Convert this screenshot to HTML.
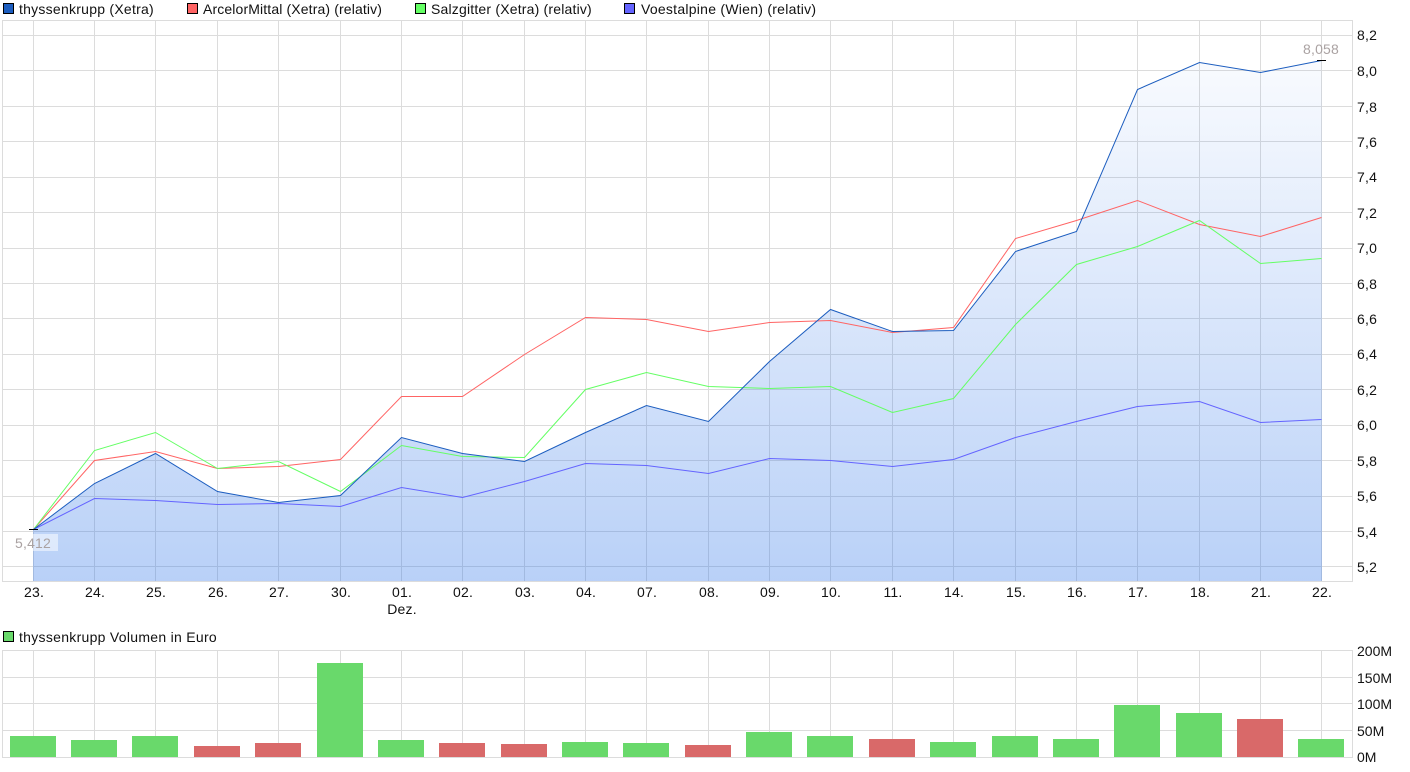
<!DOCTYPE html>
<html>
<head>
<meta charset="utf-8">
<style>
html,body{margin:0;padding:0;background:#fff;width:1410px;height:772px;overflow:hidden}
svg{display:block}
text{font-family:"Liberation Sans",sans-serif;font-size:14px;fill:#111;letter-spacing:.2px}
</style>
</head>
<body>
<svg width="1410" height="772" viewBox="0 0 1410 772" xmlns="http://www.w3.org/2000/svg">
<defs>
<linearGradient id="a" gradientUnits="userSpaceOnUse" x1="0" y1="60" x2="0" y2="581">
<stop offset="0" stop-color="#2a72e8" stop-opacity="0.03"/>
<stop offset="1" stop-color="#2a72e8" stop-opacity="0.33"/>
</linearGradient>
</defs>
<g stroke="#dcdcdc" stroke-width="1" fill="none" shape-rendering="crispEdges">
<path d="M2.5 20.5H1352.5V581.5H2.5Z"/>
<path d="M2 35.5H1352M2 70.5H1352M2 106.5H1352M2 141.5H1352M2 177.5H1352M2 212.5H1352M2 248.5H1352M2 283.5H1352M2 318.5H1352M2 354.5H1352M2 389.5H1352M2 425.5H1352M2 460.5H1352M2 496.5H1352M2 531.5H1352M2 566.5H1352"/>
<path d="M33.5 20V581M94.5 20V581M155.5 20V581M217.5 20V581M278.5 20V581M340.5 20V581M401.5 20V581M462.5 20V581M524.5 20V581M585.5 20V581M646.5 20V581M708.5 20V581M769.5 20V581M830.5 20V581M892.5 20V581M953.5 20V581M1015.5 20V581M1076.5 20V581M1137.5 20V581M1199.5 20V581M1260.5 20V581M1321.5 20V581"/>
<path d="M2.5 650.5H1352.5V757.5H2.5Z"/>
<path d="M2 677.5H1352M2 703.5H1352M2 730.5H1352"/>
<path d="M33.5 650V757M94.5 650V757M155.5 650V757M217.5 650V757M278.5 650V757M340.5 650V757M401.5 650V757M462.5 650V757M524.5 650V757M585.5 650V757M646.5 650V757M708.5 650V757M769.5 650V757M830.5 650V757M892.5 650V757M953.5 650V757M1015.5 650V757M1076.5 650V757M1137.5 650V757M1199.5 650V757M1260.5 650V757M1321.5 650V757"/>
</g>
<path fill="url(#a)" d="M33 581V529.5L94.5 483.5 155.5 453.5 217.5 491.5 278.5 502.5 340.5 495.5 401.5 437.5 462.5 453.5 524.5 461.5 585.5 432.5 646.5 405.5 708.5 421.5 769.5 361.5 830.5 309.5 892.5 331.5 953.5 330.5 1015.5 251.5 1076.5 231.5 1137.5 89.5 1199.5 62.5 1260.5 72.5 1322 60.5V581Z"/>
<g fill="none" stroke-width="1" transform="translate(.5 .5)">
<polyline stroke="#ff6464" points="33,529 94,460 155,451 217,468 278,466 340,459 401,396 462,396 524,354 585,317 646,319 708,331 769,322 830,320 892,332 953,327 1015,238 1076,220 1137,200 1199,224 1260,236 1321,217"/>
<polyline stroke="#64ff64" points="33,529 94,450 155,432 217,468 278,461 340,491 401,445 462,456 524,457 585,389 646,372 708,386 769,388 830,386 892,412 953,398 1015,324 1076,264 1137,246 1199,220 1260,263 1321,258"/>
<polyline stroke="#6464ff" points="33,529 94,498 155,500 217,504 278,503 340,506 401,487 462,497 524,481 585,463 646,465 708,473 769,458 830,460 892,466 953,459 1015,437 1076,421 1137,406 1199,401 1260,422 1321,419"/>
<polyline stroke="#1c5dbf" points="33,529 94,483 155,453 217,491 278,502 340,495 401,437 462,453 524,461 585,432 646,405 708,421 769,361 830,309 892,331 953,330 1015,251 1076,231 1137,89 1199,62 1260,72 1321,60"/>
</g>
<path stroke="#000" stroke-width="1" shape-rendering="crispEdges" d="M29 529.5H38M1317 60.5H1326"/>
<rect x="9" y="534" width="49" height="17" fill="#fff" fill-opacity="0.5"/>
<text x="15" y="548" style="fill:#aaa2a2">5,412</text>
<text x="1303" y="54" style="fill:#aaa2a2">8,058</text>
<g shape-rendering="crispEdges">
<g fill="#69d96b">
<rect x="10" y="736" width="46" height="21"/><rect x="71" y="740" width="46" height="17"/><rect x="132" y="736" width="46" height="21"/>
<rect x="317" y="663" width="46" height="94"/><rect x="378" y="740" width="46" height="17"/>
<rect x="562" y="742" width="46" height="15"/><rect x="623" y="743" width="46" height="14"/>
<rect x="746" y="732" width="46" height="25"/><rect x="807" y="736" width="46" height="21"/>
<rect x="930" y="742" width="46" height="15"/><rect x="992" y="736" width="46" height="21"/><rect x="1053" y="739" width="46" height="18"/>
<rect x="1114" y="705" width="46" height="52"/><rect x="1176" y="713" width="46" height="44"/><rect x="1298" y="739" width="46" height="18"/>
</g>
<g fill="#d96969">
<rect x="194" y="746" width="46" height="11"/><rect x="255" y="743" width="46" height="14"/>
<rect x="439" y="743" width="46" height="14"/><rect x="501" y="744" width="46" height="13"/>
<rect x="685" y="745" width="46" height="12"/><rect x="869" y="739" width="46" height="18"/>
<rect x="1237" y="719" width="46" height="38"/>
</g>
<g stroke="#000" stroke-width="1">
<rect x="3.5" y="3.5" width="10" height="10" fill="#1c5dbf"/>
<rect x="187.5" y="3.5" width="10" height="10" fill="#ff6464"/>
<rect x="415.5" y="3.5" width="10" height="10" fill="#64ff64"/>
<rect x="624.5" y="3.5" width="10" height="10" fill="#6464ff"/>
<rect x="3.5" y="631.5" width="10" height="10" fill="#69d96b"/>
</g>
</g>
<text x="19" y="14" style="letter-spacing:.25px">thyssenkrupp (Xetra)</text>
<text x="203" y="14" style="letter-spacing:.13px">ArcelorMittal (Xetra) (relativ)</text>
<text x="431" y="14" style="letter-spacing:.19px">Salzgitter (Xetra) (relativ)</text>
<text x="641" y="14" style="letter-spacing:.26px">Voestalpine (Wien) (relativ)</text>
<text x="19" y="642" style="letter-spacing:.29px">thyssenkrupp Volumen in Euro</text>
<g>
<text x="1357" y="40">8,2</text><text x="1357" y="76">8,0</text><text x="1357" y="112">7,8</text><text x="1357" y="147">7,6</text>
<text x="1357" y="182">7,4</text><text x="1357" y="218">7,2</text><text x="1357" y="253">7,0</text><text x="1357" y="289">6,8</text>
<text x="1357" y="324">6,6</text><text x="1357" y="359">6,4</text><text x="1357" y="395">6,2</text><text x="1357" y="430">6,0</text>
<text x="1357" y="466">5,8</text><text x="1357" y="501">5,6</text><text x="1357" y="537">5,4</text><text x="1357" y="572">5,2</text>
<text x="1357" y="656" style="letter-spacing:0">200M</text><text x="1357" y="683" style="letter-spacing:0">150M</text><text x="1357" y="709" style="letter-spacing:0">100M</text><text x="1357" y="736" style="letter-spacing:0">50M</text><text x="1357" y="762" style="letter-spacing:0">0M</text>
</g>
<g text-anchor="middle">
<text x="34" y="597">23.</text><text x="95" y="597">24.</text><text x="156" y="597">25.</text><text x="218" y="597">26.</text>
<text x="279" y="597">27.</text><text x="341" y="597">30.</text><text x="402" y="597">01.</text><text x="402" y="614">Dez.</text><text x="463" y="597">02.</text>
<text x="525" y="597">03.</text><text x="586" y="597">04.</text><text x="647" y="597">07.</text><text x="709" y="597">08.</text>
<text x="770" y="597">09.</text><text x="831" y="597">10.</text><text x="893" y="597">11.</text><text x="954" y="597">14.</text>
<text x="1016" y="597">15.</text><text x="1077" y="597">16.</text><text x="1138" y="597">17.</text><text x="1200" y="597">18.</text>
<text x="1261" y="597">21.</text><text x="1322" y="597">22.</text>
</g>
</svg>
</body>
</html>
